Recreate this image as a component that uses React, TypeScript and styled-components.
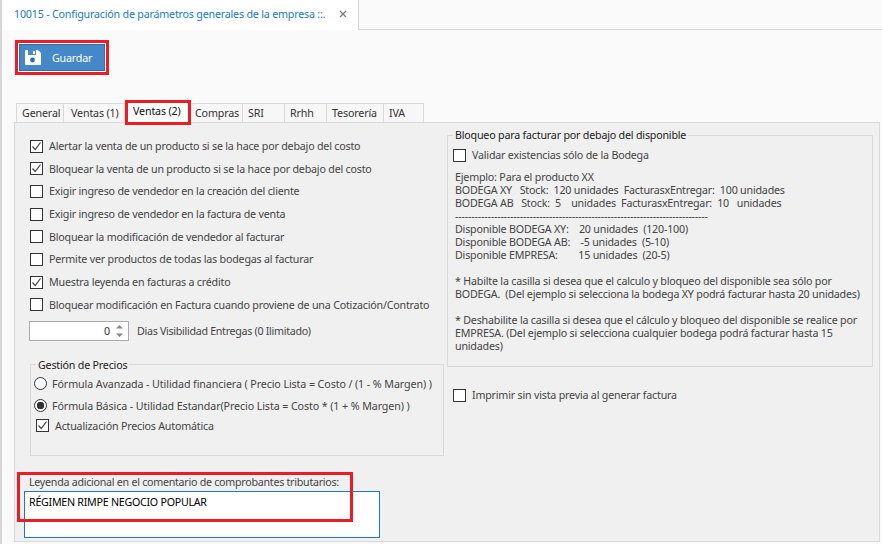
import React from "react";
import styled, { createGlobalStyle } from "styled-components";

const GlobalStyle = createGlobalStyle`
  html, body {
    margin: 0;
    padding: 0;
    background: #fafafa;
    font-family: "Noto Sans", "Liberation Sans", sans-serif;
    font-size: 10.7px;
    letter-spacing: -0.2px;
    color: #444;
  }
  * { box-sizing: border-box; }
`;

const options = [
  { text: "Alertar la venta de un producto si se la hace por debajo del costo", checked: true },
  { text: "Bloquear la venta de un producto si se la hace por debajo del costo", checked: true },
  { text: "Exigir ingreso de vendedor en la creación del cliente", checked: false },
  { text: "Exigir ingreso de vendedor en la factura de venta", checked: false },
  { text: "Bloquear la modificación de vendedor al facturar", checked: false },
  { text: "Permite ver productos de todas las bodegas al facturar", checked: false },
  { text: "Muestra leyenda en facturas a crédito", checked: true },
  { text: "Bloquear modificación en Factura cuando proviene de una Cotización/Contrato", checked: false },
];

const tabs = [
  { label: "General", width: 48, inset: 5 },
  { label: "Ventas (1)", width: 61, inset: 7 },
  { label: "Ventas (2)", width: 66, inset: 5, active: true },
  { label: "Compras", width: 52, inset: 4 },
  { label: "SRI", width: 42, inset: 5 },
  { label: "Rrhh", width: 42, inset: 5 },
  { label: "Tesorería", width: 57, inset: 5 },
  { label: "IVA", width: 40, inset: 5 },
];

const example = `Ejemplo: Para el producto XX
BODEGA XY   Stock:  120 unidades  FacturasxEntregar:  100 unidades
BODEGA AB   Stock:  5    unidades  FacturasxEntregar:  10   unidades
------------------------------------------------------------------------------
Disponible BODEGA XY:    20 unidades  (120-100)
Disponible BODEGA AB:    -5 unidades  (5-10)
Disponible EMPRESA:        15 unidades  (20-5)

* Habilte la casilla si desea que el calculo y bloqueo del disponible sea sólo por
BODEGA.  (Del ejemplo si selecciona la bodega XY podrá facturar hasta 20 unidades)

* Deshabilite la casilla si desea que el cálculo y bloqueo del disponible se realice por
EMPRESA. (Del ejemplo si selecciona cualquier bodega podrá facturar hasta 15
unidades)`;

function Check({ checked, label }: { checked?: boolean; label: string }) {
  return (
    <CheckRow>
      <CheckBox>
        {checked && (
          <svg width="11" height="11" viewBox="0 0 11 11">
            <path d="M1.5 5.5 L4.2 8.5 L9.5 1.5" fill="none" stroke="#444" strokeWidth="1.2" />
          </svg>
        )}
      </CheckBox>
      <span>{label}</span>
    </CheckRow>
  );
}

export default function App() {
  return (
    <>
      <GlobalStyle />
      <Page>
        <DocBar>
          <DocTab>
            <DocTitle>10015 - Configuración de parámetros generales de la empresa ::.</DocTitle>
            <svg width="8" height="8" viewBox="0 0 8 8">
              <path d="M1 1 L7 7 M7 1 L1 7" stroke="#777" strokeWidth="1.2" />
            </svg>
          </DocTab>
        </DocBar>
        <Toolbar>
          <SaveOutline>
            <SaveButton>
              <svg width="16" height="15" viewBox="0 0 16 15">
                <path d="M1 0 H13 L16 3 V14 a1 1 0 0 1 -1 1 H1 a1 1 0 0 1 -1 -1 V1 a1 1 0 0 1 1 -1 Z" fill="#fff" />
                <rect x="3" y="0" width="8" height="5" fill="#4a8ac6" />
                <rect x="8" y="1" width="2" height="3" fill="#fff" />
                <circle cx="7.5" cy="10" r="2.4" fill="#2f6da8" />
              </svg>
              <span>Guardar</span>
            </SaveButton>
          </SaveOutline>
        </Toolbar>
        <TabStrip>
          {tabs.map((t) => (
            <Tab key={t.label} $active={t.active} $width={t.width} $inset={t.inset}>
              {t.label}
            </Tab>
          ))}
        </TabStrip>
        <Panel>
          <LeftColumn>
            <CheckList>
              {options.map((o) => (
                <Check key={o.text} label={o.text} checked={o.checked} />
              ))}
            </CheckList>
            <SpinRow>
              <SpinBox>
                <SpinValue>0</SpinValue>
                <SpinArrows>
                  <svg width="7" height="14" viewBox="0 0 7 14">
                    <path d="M3.5 1 L7 4.5 H0 Z M0 9.5 H7 L3.5 13 Z" fill="#888" />
                  </svg>
                </SpinArrows>
              </SpinBox>
              <SpinLabel>Dias Visibilidad Entregas (0 Ilimitado)</SpinLabel>
            </SpinRow>
            <PriceGroup>
              <PriceTitle>Gestión de Precios</PriceTitle>
              <RadioRow>
                <Radio />
                <span>Fórmula Avanzada - Utilidad financiera ( Precio Lista = Costo / (1 - % Margen) )</span>
              </RadioRow>
              <RadioRow>
                <Radio $selected />
                <span>Fórmula Básica - Utilidad Estandar(Precio Lista = Costo * (1 + % Margen) )</span>
              </RadioRow>
              <AutoRow>
                <Check checked label="Actualización Precios Automática" />
              </AutoRow>
            </PriceGroup>
          </LeftColumn>
          <RightColumn>
            <StockGroup>
              <StockTitle>Bloqueo para facturar por debajo del disponible</StockTitle>
              <Check label="Validar existencias sólo de la Bodega" />
              <ExampleText>{example}</ExampleText>
            </StockGroup>
            <PrintRow>
              <Check label="Imprimir sin vista previa al generar factura" />
            </PrintRow>
          </RightColumn>
          <LegendBlock>
            <LegendLabel>Leyenda adicional en el comentario de comprobantes tributarios:</LegendLabel>
            <LegendInput>RÉGIMEN RIMPE NEGOCIO POPULAR</LegendInput>
            <RedMark />
          </LegendBlock>
        </Panel>
      </Page>
    </>
  );
}

const Page = styled.div`
  width: 882px;
  height: 544px;
  overflow: hidden;
  border-left: 2px solid #d6d6d6;
  display: flex;
  flex-direction: column;
`;

const DocBar = styled.div`
  height: 30px;
  flex: none;
  display: flex;
  border-bottom: 1px solid #d6d6d6;
`;

const DocTab = styled.div`
  width: 357px;
  height: 30px;
  padding: 0 11px 2px 12px;
  display: flex;
  align-items: center;
  justify-content: space-between;
  background: #fff;
  border-right: 1px solid #d6d6d6;
`;

const DocTitle = styled.span`
  color: #1a7acc;
  white-space: nowrap;
`;

const Toolbar = styled.div`
  height: 73px;
  flex: none;
  padding: 10px 0 0 13px;
`;

const SaveOutline = styled.div`
  width: 94px;
  height: 35px;
  border: 3px solid #ed1c24;
  padding: 1px;
  background: #fff;
`;

const SaveButton = styled.div`
  height: 100%;
  display: flex;
  align-items: center;
  gap: 11px;
  padding-left: 5px;
  background: #4488c7;
  border: 1px solid #2f6da8;
  color: #fff;
`;

const TabStrip = styled.div`
  height: 19px;
  flex: none;
  display: flex;
  padding-left: 14px;
  position: relative;
  z-index: 1;
`;

const Tab = styled.div<{ $active?: boolean; $width: number; $inset: number }>`
  width: ${(p) => p.$width}px;
  height: ${(p) => (p.$active ? "25px" : "19px")};
  margin-top: ${(p) => (p.$active ? "-3px" : "0")};
  padding: ${(p) => (p.$active ? "1px" : "2px")} 0 0 ${(p) => p.$inset}px;
  background: ${(p) => (p.$active ? "#fff" : "#f7f7f7")};
  border: ${(p) => (p.$active ? "3px solid #ed1c24" : "1px solid #d9d9d9")};
  border-left-width: ${(p) => (p.$active ? "3px" : "0")};
  border-bottom-width: ${(p) => (p.$active ? "3px" : "0")};
  color: ${(p) => (p.$active ? "#111" : "#333")};
  letter-spacing: -0.15px;
  white-space: nowrap;
  &:first-child {
    border-left-width: 1px;
  }
`;

const Panel = styled.div`
  position: relative;
  width: 866px;
  height: 420px;
  margin-left: 12px;
  background: #f0f0f0;
  border: 1px solid #d9d9d9;
  display: grid;
  grid-template-columns: 432px 1fr;
  grid-template-rows: 1fr auto;
`;

const LeftColumn = styled.div`
  padding: 16px 0 0 15px;
`;

const CheckList = styled.div`
  display: flex;
  flex-direction: column;
  gap: 8.7px;
`;

const CheckRow = styled.div`
  display: flex;
  align-items: center;
  gap: 6px;
  height: 14px;
  white-space: nowrap;
`;

const CheckBox = styled.span`
  width: 13px;
  height: 13px;
  flex: none;
  display: flex;
  align-items: center;
  justify-content: center;
  background: #fff;
  border: 1px solid #333;
`;

const SpinRow = styled.div`
  display: flex;
  align-items: center;
  gap: 8px;
  margin-top: 9px;
  margin-left: -1px;
`;

const SpinBox = styled.div`
  width: 100px;
  height: 20px;
  display: flex;
  align-items: center;
  justify-content: flex-end;
  gap: 6px;
  padding-right: 5px;
  background: #fff;
  border: 1px solid #ababab;
`;

const SpinValue = styled.span`
  color: #333;
`;

const SpinArrows = styled.span`
  display: flex;
`;

const SpinLabel = styled.span`
  letter-spacing: -0.3px;
`;

const PriceGroup = styled.fieldset`
  width: 414px;
  height: 98px;
  min-width: 0;
  margin: 17px 0 0 0;
  padding: 1px 0 0 3px;
  border: 1px solid #d9d9d9;
`;

const GroupTitle = styled.legend`
  padding: 0 2px;
  color: #222;
  line-height: 14px;
`;

const PriceTitle = styled(GroupTitle)`
  margin-left: 2px;
`;

const StockTitle = styled(GroupTitle)`
  margin-left: 0;
`;

const RadioRow = styled.div`
  display: flex;
  align-items: center;
  gap: 5px;
  height: 22px;
  letter-spacing: -0.1px;
  white-space: nowrap;
`;

const Radio = styled.span<{ $selected?: boolean }>`
  width: 13px;
  height: 13px;
  flex: none;
  border-radius: 50%;
  border: 1px solid #333;
  background: ${(p) =>
    p.$selected ? "radial-gradient(circle, #333 0 3.5px, #fff 4px)" : "#fff"};
`;

const AutoRow = styled.div`
  margin: 2px 0 0 2px;
`;

const RightColumn = styled.div`
  padding: 5px 0 0 0;
`;

const StockGroup = styled.fieldset`
  width: 426px;
  height: 239px;
  min-width: 0;
  margin: 0;
  padding: 6px 0 0 5px;
  border: 1px solid #d9d9d9;
`;

const ExampleText = styled.div`
  margin: 9px 0 0 2px;
  line-height: 13px;
  white-space: pre;
  color: #444;
`;

const PrintRow = styled.div`
  margin: 21px 0 0 6px;
`;

const LegendBlock = styled.div`
  position: relative;
  grid-column: 1 / -1;
  height: 68px;
  padding: 2px 0 0 9px;
`;

const LegendLabel = styled.div`
  padding-left: 5px;
  line-height: 14px;
  letter-spacing: -0.27px;
`;

const LegendInput = styled.div`
  width: 356px;
  height: 47px;
  margin-top: 2px;
  padding: 3px 4px;
  background: #fff;
  border: 1px solid #1a79c9;
  color: #000;
  letter-spacing: -0.27px;
`;

const RedMark = styled.div`
  position: absolute;
  left: 2px;
  top: -1px;
  width: 336px;
  height: 50px;
  border: 3px solid #ed1c24;
  pointer-events: none;
`;
